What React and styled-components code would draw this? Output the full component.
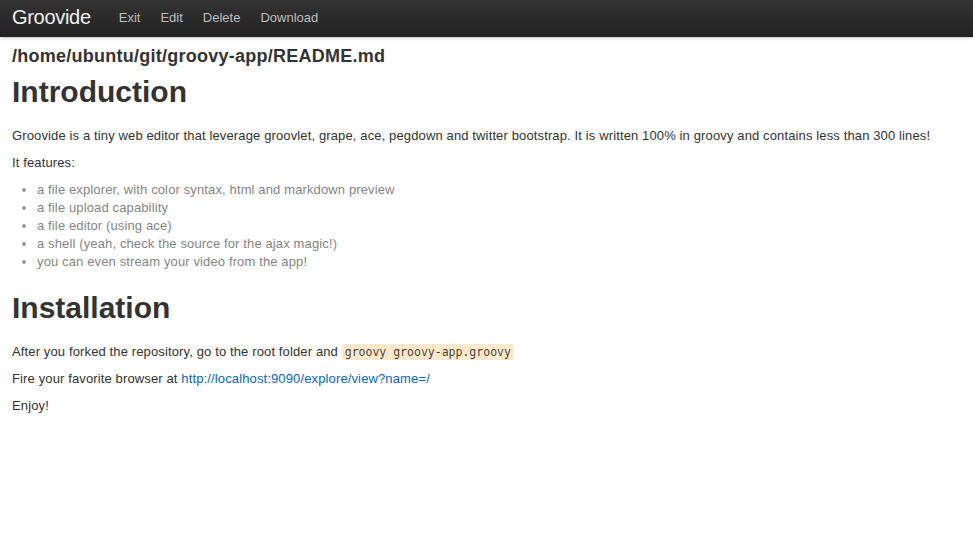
import React from 'react'
import styled, { createGlobalStyle } from 'styled-components'

const GlobalStyle = createGlobalStyle`
  body {
    margin: 0;
    background: #fff;
    font-family: "Liberation Sans", Arial, Helvetica, sans-serif;
    font-size: 13px;
    line-height: 18px;
    letter-spacing: 0.13px;
    color: #333;
  }
`

const Navbar = styled.div`
  height: 37px;
  display: flex;
  align-items: center;
  padding: 0 12px;
  letter-spacing: 0;
  background-image: linear-gradient(to bottom, #333333, #222222);
  box-shadow: 0 1px 3px rgba(0, 0, 0, 0.25), inset 0 -1px 0 rgba(0, 0, 0, 0.1);
`

const Brand = styled.a`
  font-size: 20px;
  line-height: 1;
  color: #f2f2f2;
  text-decoration: none;
  margin-right: 18px;
  margin-top: -3px;
  letter-spacing: -0.3px;
`

const Nav = styled.ul`
  display: flex;
  list-style: none;
  margin: 0;
  padding: 0;
`

const NavLink = styled.a`
  display: block;
  padding: 9px 10px 10px;
  font-size: 13px;
  color: #bdbdbd;
  text-decoration: none;
`

const Content = styled.div`
  padding: 0 12px;
`

const FilePath = styled.h3`
  font-size: 18px;
  line-height: 27px;
  font-weight: bold;
  letter-spacing: 0.25px;
  margin: 6px 0 0;
  color: #333;
`

const Heading = styled.h1`
  font-size: 30px;
  line-height: 36px;
  font-weight: bold;
  letter-spacing: 0;
  margin: 19px 0 17px;
  color: #333;

  &:first-of-type {
    margin-top: 4px;
  }
`

const Para = styled.p`
  margin: 0 0 9px;
`

const Features = styled.ul`
  margin: 0 0 9px;
  padding-left: 25px;
  color: #858585;

  li::marker {
    color: #999;
  }
`

const Code = styled.code`
  font-family: "DejaVu Sans Mono", Menlo, monospace;
  font-size: 11.5px;
  letter-spacing: 0;
  padding: 1px 3px;
  background-color: #fee9cc;
  color: rgba(0, 0, 0, 0.75);
  border-radius: 3px;
`

const Link = styled.a`
  color: #0866c6;
  text-decoration: none;
`

const features = [
  'a file explorer, with color syntax, html and markdown preview',
  'a file upload capability',
  'a file editor (using ace)',
  'a shell (yeah, check the source for the ajax magic!)',
  'you can even stream your video from the app!',
]

export default function App() {
  return (
    <>
      <GlobalStyle />
      <Navbar>
        <Brand href="#">Groovide</Brand>
        <Nav>
          {['Exit', 'Edit', 'Delete', 'Download'].map(item => (
            <li key={item}><NavLink href="#">{item}</NavLink></li>
          ))}
        </Nav>
      </Navbar>
      <Content>
        <FilePath>/home/ubuntu/git/groovy-app/README.md</FilePath>
        <Heading>Introduction</Heading>
        <Para>
          Groovide is a tiny web editor that leverage groovlet, grape, ace, pegdown and twitter bootstrap. It is written 100% in groovy and contains less than 300 lines!
        </Para>
        <Para>It features:</Para>
        <Features>
          {features.map(f => <li key={f}>{f}</li>)}
        </Features>
        <Heading>Installation</Heading>
        <Para>
          After you forked the repository, go to the root folder and <Code>groovy groovy-app.groovy</Code>
        </Para>
        <Para>
          Fire your favorite browser at <Link href="#">http://localhost:9090/explore/view?name=/</Link>
        </Para>
        <Para>Enjoy!</Para>
      </Content>
    </>
  )
}
